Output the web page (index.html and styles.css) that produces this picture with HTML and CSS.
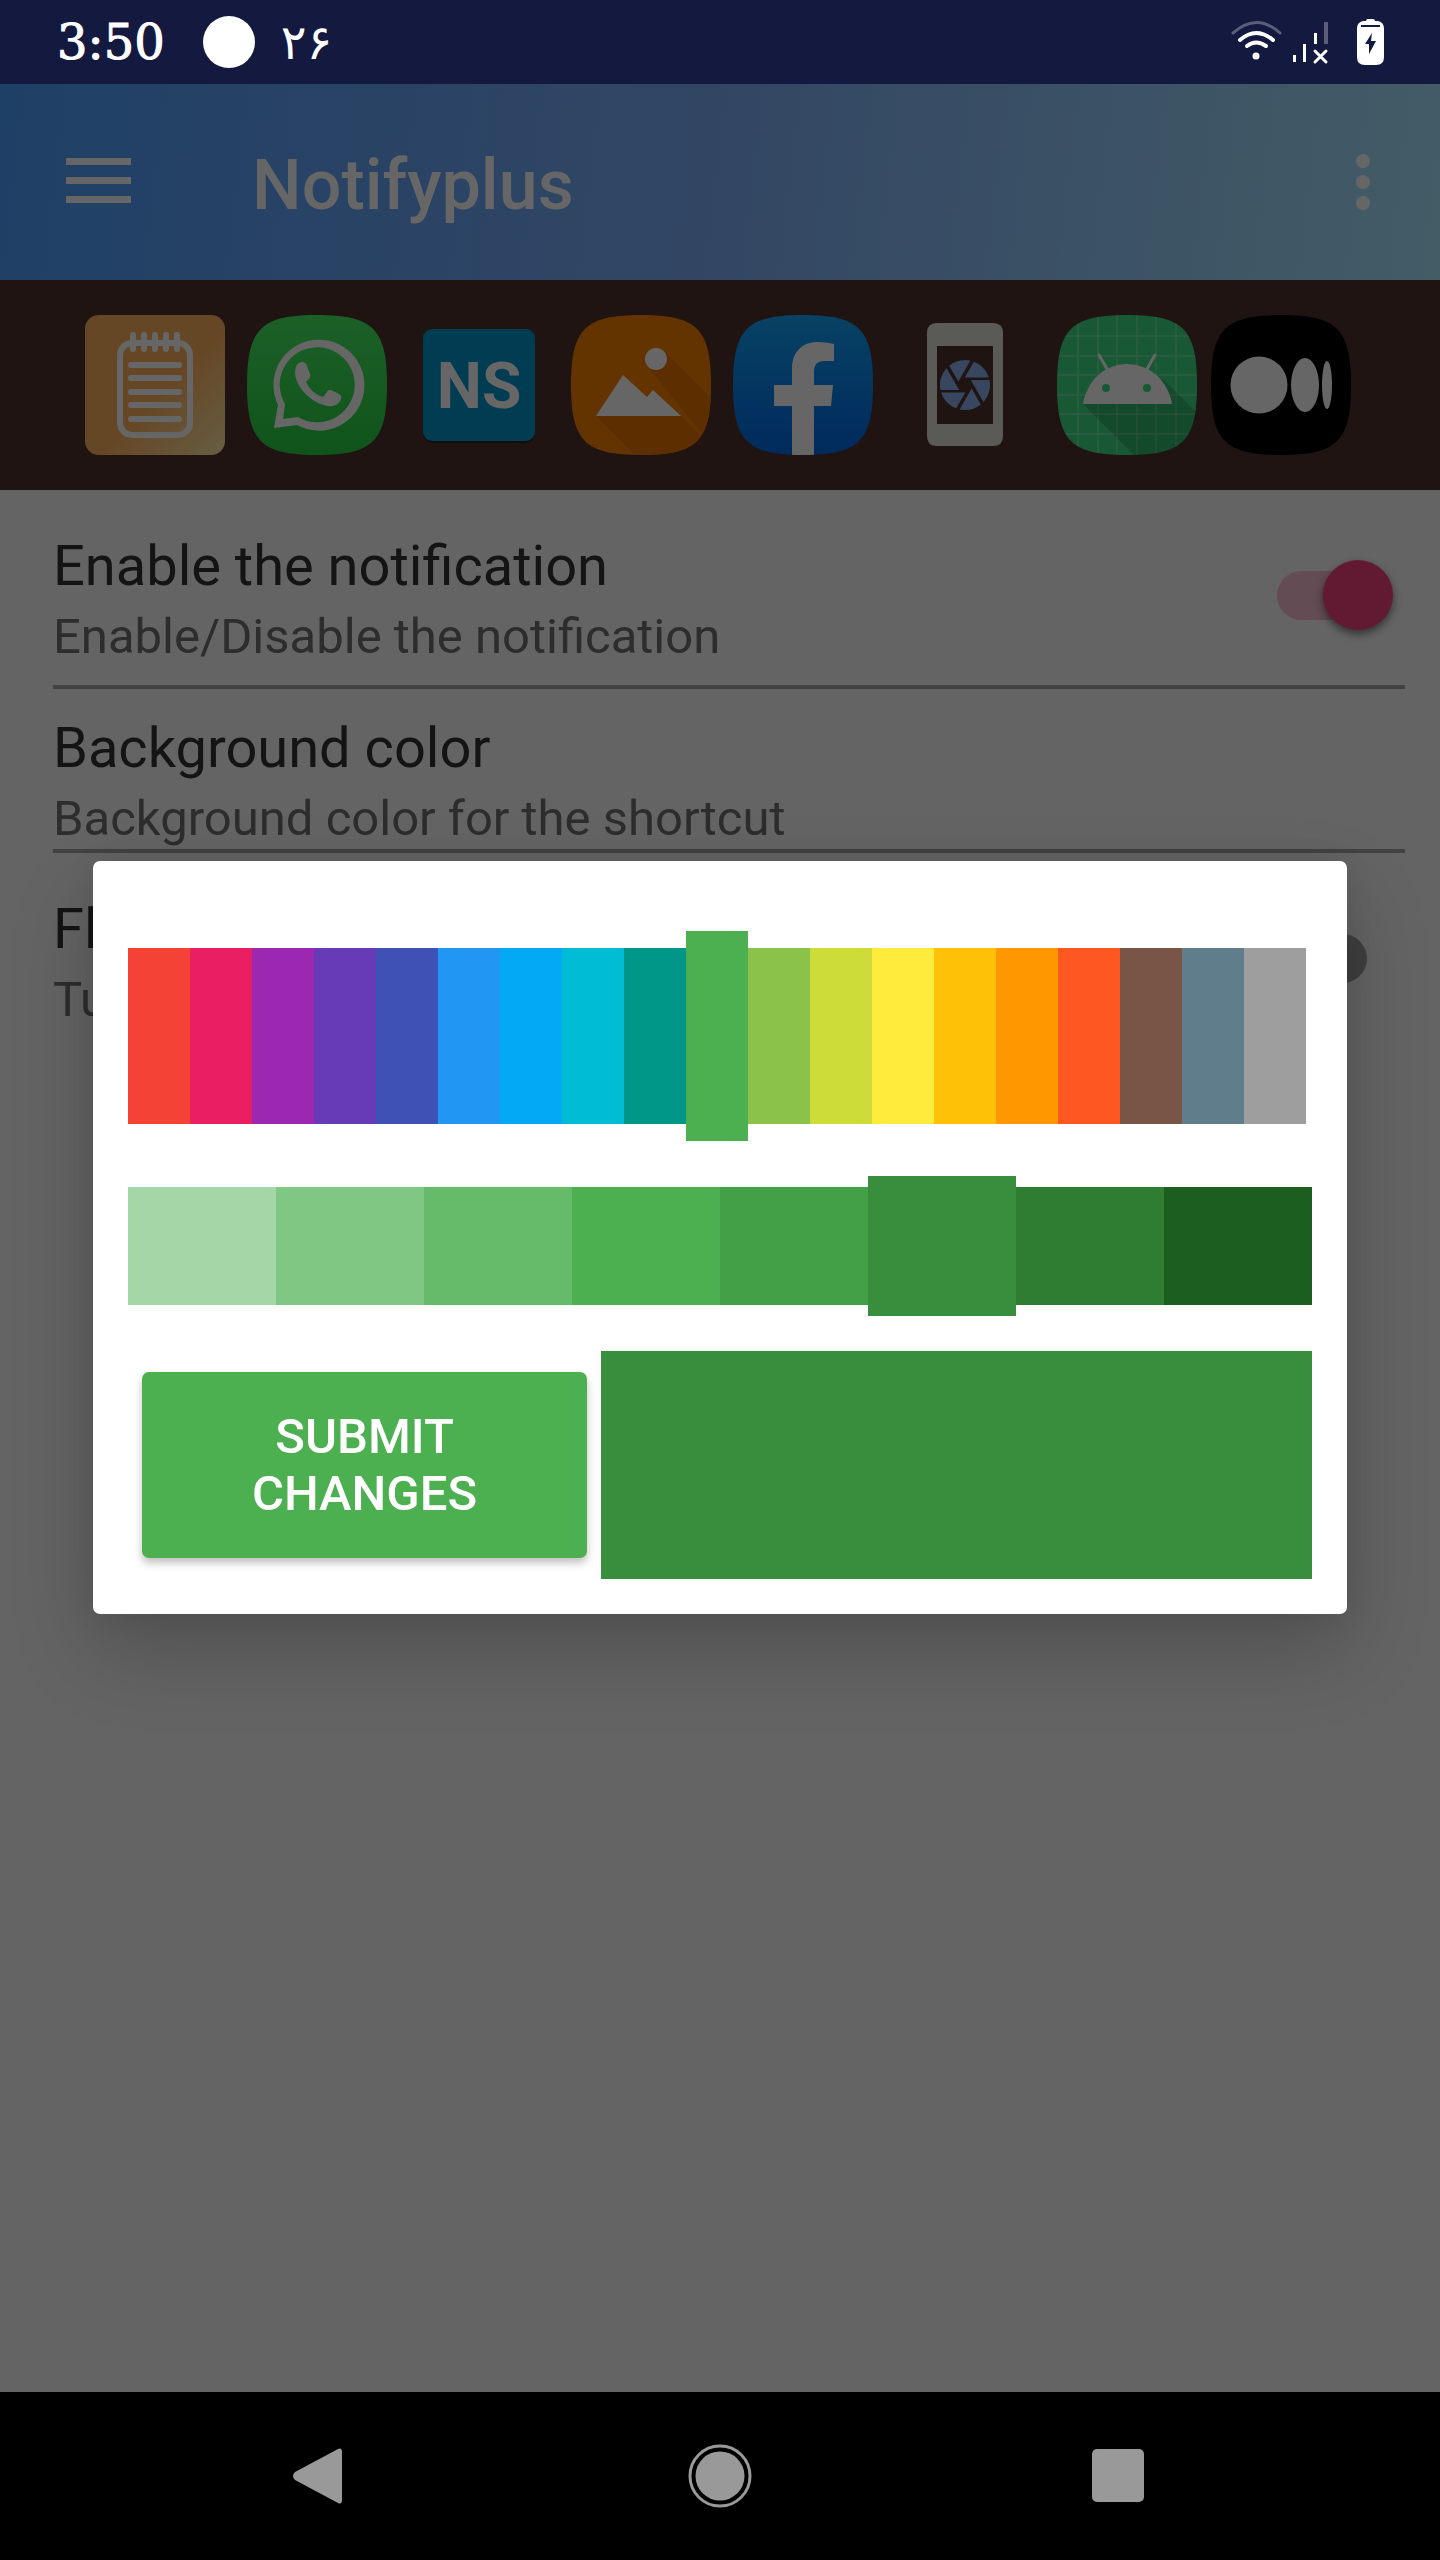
FILE: index.html
```html
<!DOCTYPE html>
<html lang="en">
<head>
<meta charset="utf-8">
<meta name="viewport" content="width=device-width, initial-scale=1">
<title>Notifyplus</title>
<link rel="stylesheet" href="styles.css">
</head>
<body>
<div class="status-bar">
  <span class="clock">3:50</span>
  <span class="status-dot"></span>
  <span class="day" lang="fa">۲۶</span>
  <svg class="status-icons" width="160" height="60" viewBox="1228 12 160 60" aria-hidden="true">
    <g fill="none" stroke="#fff" stroke-width="3" stroke-linecap="round">
      <path d="M1233 33Q1257 12 1280 33" opacity=".3"/>
      <path d="M1240 40Q1256 26 1273 40" stroke-width="4"/>
      <path d="M1247 46Q1256 39 1266 46" stroke-width="4"/>
      <path d="M1315 51L1326 62M1326 51L1315 62"/>
    </g>
    <circle cx="1256" cy="56" r="3.500" fill="#fff"/>
    <path fill="#fff" d="M1293 55H1296V62H1293ZM1303 44H1306V62H1303ZM1314 33H1317V44H1314Z"/>
    <path fill="#fff" opacity=".3" d="M1324 22H1328V44H1324Z"/>
    <path fill="#fff" d="M1366 21Q1366 19 1368 19H1373Q1375 19 1375 21L1378 21Q1384 22 1384 29V57Q1384 65 1376 65H1365Q1357 65 1357 57V29Q1357 22 1363 21Z"/>
    <path d="M1361 26H1380" stroke="#141940" stroke-width="2"/>
    <path fill="#141940" d="M1372 33L1365 44H1369V54L1376 41H1371Z"/>
  </svg>
</div>

<div class="screen">
  <header class="toolbar">
    <button class="icon-button" aria-label="Open menu">
      <svg width="65" height="48" viewBox="0 0 65 48"><path d="M0 0H65V7H0ZM0 19H65V26H0ZM0 38H65V45H0Z" fill="#fff"/></svg>
    </button>
    <h1 class="title">Notifyplus</h1>
    <button class="icon-button" aria-label="More options">
      <svg width="14" height="56" viewBox="0 0 14 56"><g fill="#fff"><circle cx="7" cy="7" r="7"/><circle cx="7" cy="28" r="7"/><circle cx="7" cy="49" r="7"/></g></svg>
    </button>
  </header>

  <div class="shortcuts">
    <svg viewBox="0 0 140 140" role="img" aria-label="Notes">
      <defs>
        <linearGradient id="notes" x1="0" y1="0" x2="1" y2="1"><stop offset=".55" stop-color="#ffb25e"/><stop offset="1" stop-color="#ffeba8"/></linearGradient>
        <linearGradient id="green" x1="0" y1="0" x2="0" y2="1"><stop offset="0" stop-color="#46f064"/><stop offset="1" stop-color="#28d246"/></linearGradient>
        <linearGradient id="blue" x1="0" y1="0" x2="0" y2="1"><stop offset="0" stop-color="#14a5fa"/><stop offset="1" stop-color="#0069e8"/></linearGradient>
        <clipPath id="squircle"><path d="M0 70C0 14 14 0 70 0S140 14 140 70 126 140 70 140 0 126 0 70Z"/></clipPath>
      </defs>
      <rect width="140" height="140" rx="14" fill="url(#notes)"/>
      <g fill="none" stroke="#fff" stroke-width="6" stroke-linecap="round">
        <rect x="35" y="28" width="70" height="92" rx="12"/>
        <path d="M48 20V34M59 20V34M70 20V34M81 20V34M92 20V34M46 50H94M46 63H94M46 77H94M46 90H94M46 104H94"/>
      </g>
    </svg>
    <svg viewBox="0 0 140 140" role="img" aria-label="WhatsApp">
      <g clip-path="url(#squircle)"><rect width="140" height="140" fill="url(#green)"/></g>
      <path fill="#fff" fill-rule="evenodd" d="M27 113L31 90A45.500 45.500 0 1 1 50 110ZM36 104L38 89A37.500 37.500 0 1 1 51 102Z"/>
      <path fill="#fff" d="M48 58C48 51 51 47 55 47C58 47 59 48 60 51L63 59C64 61 63 63 61 65L59 67C63 75 69 80 76 82L80 77C81 75 82 75 84 75L92 79C95 81 94 82 94 84C92 90 86 92 80 91C63 87 49 72 48 58Z"/>
    </svg>
    <svg viewBox="0 0 140 140" role="img" aria-label="NS">
      <rect x="14" y="16" width="112" height="112" rx="9" fill="#000" opacity=".4"/>
      <rect x="14" y="14" width="112" height="112" rx="9" fill="#0096cd"/>
      <text class="ns-mark" x="70" y="93" text-anchor="middle">NS</text>
    </svg>
    <svg viewBox="0 0 140 140" role="img" aria-label="Gallery">
      <g clip-path="url(#squircle)">
        <rect width="140" height="140" fill="#fa8200"/>
        <path fill="#e67400" d="M93 36L145 88V140H64L25 101H110L145 136L77 52Z"/>
      </g>
      <g fill="#fff"><circle cx="85" cy="44" r="11"/><path d="M25 101L52 60L76 82L82 75L110 101Z"/></g>
    </svg>
    <svg viewBox="0 0 140 140" role="img" aria-label="Facebook">
      <g clip-path="url(#squircle)">
        <rect width="140" height="140" fill="url(#blue)"/>
        <path fill="#fff" d="M59 140V91H41V70H59V54C59 37 69 27 85 27Q93 27 101 29V46H91C84 46 81 50 81 57V70H100L98 91H81V140Z"/>
      </g>
    </svg>
    <svg viewBox="0 0 140 140" role="img" aria-label="Screenshot">
      <path fill="#e1e1d8" fill-rule="evenodd" d="M42 8H98Q108 8 108 18V121Q108 131 98 131H42Q32 131 32 121V18Q32 8 42 8ZM42 31V109H98V31Z"/>
      <path fill="#8caef0" transform="translate(40 40) scale(2.500)" d="M9.400 10.500l4.770-8.260C13.470 2.090 12.750 2 12 2c-2.400 0-4.600.85-6.320 2.250l3.660 6.350.06-.1zM21.540 9c-.92-2.920-3.150-5.260-6-6.340L11.880 9h9.660zm.26 1h-7.490l.29.5 4.760 8.250C21 16.970 22 14.610 22 12c0-.69-.07-1.350-.2-2zM8.540 12l-3.900-6.750C3.010 7.030 2 9.390 2 12c0 .69.07 1.350.2 2h7.490l-1.150-2zm-6.080 3c.92 2.920 3.150 5.260 6 6.340L12.120 15H2.460zm11.270 0l-3.900 6.760c.7.15 1.420.24 2.170.24 2.400 0 4.600-.85 6.320-2.250l-3.660-6.350-.93 1.600z"/>
    </svg>
    <svg viewBox="0 0 140 140" role="img" aria-label="Android app">
      <g clip-path="url(#squircle)">
        <rect width="140" height="140" fill="#3ddc84"/>
        <path d="M21 0V140M41 0V140M60 0V140M80 0V140M99 0V140M119 0V140M0 21H140M0 41H140M0 60H140M0 80H140M0 99H140M0 119H140" stroke="#fff" stroke-opacity=".3" stroke-width="1.500"/>
        <path fill="#000" fill-opacity=".16" d="M26 89L77 140H140V98L106 64Z"/>
      </g>
      <path fill="#fff" d="M26 89C30 65 48 49 70 49S111 65 115 89Z"/>
      <path d="M42 40L50 54M98 40L90 54" stroke="#fff" stroke-width="3" stroke-linecap="round"/>
      <circle cx="49" cy="73" r="4" fill="#3ddc84"/><circle cx="90" cy="73" r="4" fill="#3ddc84"/>
    </svg>
    <svg class="last" viewBox="0 0 140 140" role="img" aria-label="Medium">
      <g clip-path="url(#squircle)"><rect width="140" height="140"/></g>
      <g fill="#fff"><circle cx="48" cy="70" r="28.500"/><ellipse cx="94" cy="70" rx="14" ry="27"/><ellipse cx="116" cy="70" rx="5" ry="24"/></g>
    </svg>
  </div>

  <main class="settings">
    <label class="row">
      <span class="text"><span class="name">Enable the notification</span><span class="hint">Enable/Disable the notification</span></span>
      <input class="switch" type="checkbox" checked>
    </label>
    <hr class="rule">
    <div class="row">
      <span class="text"><span class="name">Background color</span><span class="hint">Background color for the shortcut</span></span>
    </div>
    <hr class="rule tight">
    <label class="row">
      <span class="text"><span class="name">Flashlight</span><span class="hint">Turn on the flashlight</span></span>
      <input class="switch" type="checkbox">
    </label>
  </main>

  <div class="scrim">
    <form class="dialog" role="dialog" aria-label="Pick a color">
      <div class="swatches hues" role="radiogroup" aria-label="Color">
        <input type="radio" name="hue" aria-label="Red" class="red">
        <input type="radio" name="hue" aria-label="Pink" class="pink">
        <input type="radio" name="hue" aria-label="Purple" class="purple">
        <input type="radio" name="hue" aria-label="Deep purple" class="deep-purple">
        <input type="radio" name="hue" aria-label="Indigo" class="indigo">
        <input type="radio" name="hue" aria-label="Blue" class="blue">
        <input type="radio" name="hue" aria-label="Light blue" class="light-blue">
        <input type="radio" name="hue" aria-label="Cyan" class="cyan">
        <input type="radio" name="hue" aria-label="Teal" class="teal">
        <input type="radio" name="hue" aria-label="Green" class="green" checked>
        <input type="radio" name="hue" aria-label="Light green" class="light-green">
        <input type="radio" name="hue" aria-label="Lime" class="lime">
        <input type="radio" name="hue" aria-label="Yellow" class="yellow">
        <input type="radio" name="hue" aria-label="Amber" class="amber">
        <input type="radio" name="hue" aria-label="Orange" class="orange">
        <input type="radio" name="hue" aria-label="Deep orange" class="deep-orange">
        <input type="radio" name="hue" aria-label="Brown" class="brown">
        <input type="radio" name="hue" aria-label="Blue grey" class="blue-grey">
        <input type="radio" name="hue" aria-label="Grey" class="grey">
      </div>
      <div class="swatches shades" role="radiogroup" aria-label="Shade">
        <input type="radio" name="shade" aria-label="Green 200" class="green-200">
        <input type="radio" name="shade" aria-label="Green 300" class="green-300">
        <input type="radio" name="shade" aria-label="Green 400" class="green-400">
        <input type="radio" name="shade" aria-label="Green 500" class="green">
        <input type="radio" name="shade" aria-label="Green 600" class="green-600">
        <input type="radio" name="shade" aria-label="Green 700" class="green-700" checked>
        <input type="radio" name="shade" aria-label="Green 800" class="green-800">
        <input type="radio" name="shade" aria-label="Green 900" class="green-900">
      </div>
      <div class="actions">
        <button class="submit" type="button">SUBMIT CHANGES</button>
        <div class="preview green-700"></div>
      </div>
    </form>
  </div>
</div>

<nav class="nav-bar">
  <button aria-label="Back"><svg width="64" height="64" viewBox="0 0 64 64"><path d="M7 28L50 5Q54 3 54 8V56Q54 61 50 59L7 36Q3 32 7 28Z" fill="#999"/></svg></button>
  <button aria-label="Home"><svg width="64" height="64" viewBox="0 0 64 64"><circle cx="32" cy="32" r="30" fill="none" stroke="#999" stroke-width="3"/><circle cx="32" cy="32" r="24.500" fill="#999"/></svg></button>
  <button aria-label="Recent apps"><svg width="64" height="64" viewBox="0 0 64 64"><rect x="4" y="5" width="52" height="53" rx="5" fill="#999"/></svg></button>
</nav>
</body>
</html>
```

FILE: styles.css
```css
* {
  box-sizing: border-box;
}

body {
  margin: 0;
  min-height: 100vh;
  display: flex;
  flex-direction: column;
  background: #fafafa;
  font-family: Roboto, "Noto Sans", sans-serif;
}

button {
  padding: 0;
  border: 0;
  background: none;
  font: inherit;
}

svg {
  display: block;
}

/* System status bar */
.status-bar {
  display: flex;
  align-items: center;
  height: 84px;
  padding: 0 52px 0 57px;
  background: #141940;
  color: #fff;
}

.clock {
  font: 48px/56px "DejaVu Serif", serif;
  -webkit-text-stroke: 1px #fff;
}

.status-dot {
  width: 52px;
  height: 52px;
  margin: 0 26px 0 38px;
  border-radius: 50%;
  background: #fff;
}

.day {
  font: 48px/56px "DejaVu Sans", sans-serif;
}

.status-icons {
  margin-left: auto;
}

/* App content; the dialog layer covers all of it */
.screen {
  position: relative;
  flex: 1;
}

.toolbar {
  display: flex;
  align-items: center;
  height: 196px;
  padding: 0 70px 0 66px;
  background: linear-gradient(97deg, #4ea0ff 0%, #7fb0fa 50%, #aae6ff 100%);
}

.title {
  flex: 1;
  margin: 6px 0 0 121px;
  color: #fff;
  font-size: 70px;
  line-height: 82px;
  font-weight: 500;
}

.shortcuts {
  display: flex;
  align-items: center;
  gap: 22px;
  height: 210px;
  padding-left: 85px;
  background: #4e342e;
}

.shortcuts svg {
  flex: none;
  width: 140px;
  height: 140px;
}

.shortcuts .last {
  margin-left: -8px;
}

.ns-mark {
  fill: #fff;
  font-size: 64px;
  font-weight: 700;
}

/* Settings list */
.settings {
  padding: 34px 35px 34px 53px;
}

.row {
  display: flex;
  align-items: center;
  justify-content: space-between;
  padding-right: 12px;
}

.text {
  display: flex;
  flex-direction: column;
  gap: 9px;
  padding-top: 9px;
}

.name {
  color: #333;
  font-size: 56px;
  line-height: 66px;
}

.hint {
  color: #707070;
  font-size: 49px;
  line-height: 58px;
}

.rule {
  height: 4px;
  margin: 19px 0 17px;
  border: 0;
  background: #a6a6a6;
}

.rule.tight {
  margin: 1px 0 34px;
}

.switch {
  appearance: none;
  display: grid;
  align-items: center;
  width: 142px;
  height: 72px;
  margin: 0;
}

.switch::before,
.switch::after {
  content: "";
  grid-area: 1 / 1;
}

.switch::before {
  justify-self: center;
  width: 90px;
  height: 49px;
  border-radius: 25px;
  background: #a0a0a0;
}

.switch::after {
  width: 70px;
  height: 70px;
  border-radius: 50%;
  background: #f0f0f0;
  box-shadow: 0 4px 8px rgba(0, 0, 0, .5);
}

.switch:checked::before {
  background: #f7bed0;
}

.switch:checked::after {
  justify-self: end;
  background: #f5417d;
}

/* Color dialog */
.scrim {
  position: absolute;
  inset: 0;
  display: flex;
  align-items: center;
  padding: 0 93px 2px;
  background: rgba(0, 0, 0, .6);
}

.dialog {
  display: flex;
  flex-direction: column;
  gap: 35px;
  width: 100%;
  padding: 70px 35px 35px;
  border-radius: 7px;
  background: #fff;
  box-shadow: 0 36px 84px rgba(0, 0, 0, .2), 0 0 28px rgba(0, 0, 0, .08);
}

.swatches {
  display: flex;
}

.swatches input {
  appearance: none;
  flex: 1;
  margin: 17px 0;
}

.hues {
  height: 210px;
  padding-right: 6px;
}

.shades {
  height: 140px;
}

.shades input {
  margin: 11px 0;
}

.swatches input:checked {
  margin: 0;
}

.actions {
  display: flex;
  height: 228px;
}

.submit {
  flex: 0 1 445px;
  margin: 21px 14px;
  padding: 0 80px;
  border-radius: 7px;
  background: #4caf50;
  box-shadow: 0 5px 8px rgba(0, 0, 0, .25);
  color: #fff;
  font-size: 49px;
  line-height: 57px;
  font-weight: 500;
}

.preview {
  flex: 1;
}

.red { background: #f44336; }
.pink { background: #e91e63; }
.purple { background: #9c27b0; }
.deep-purple { background: #673ab7; }
.indigo { background: #3f51b5; }
.blue { background: #2196f3; }
.light-blue { background: #03a9f4; }
.cyan { background: #00bcd4; }
.teal { background: #009688; }
.green { background: #4caf50; }
.light-green { background: #8bc34a; }
.lime { background: #cddc39; }
.yellow { background: #ffeb3b; }
.amber { background: #ffc107; }
.orange { background: #ff9800; }
.deep-orange { background: #ff5722; }
.brown { background: #795548; }
.blue-grey { background: #607d8b; }
.grey { background: #9e9e9e; }
.green-200 { background: #a5d6a7; }
.green-300 { background: #81c784; }
.green-400 { background: #66bb6a; }
.green-600 { background: #43a047; }
.green-700 { background: #388e3c; }
.green-800 { background: #2e7d32; }
.green-900 { background: #1b5e20; }

/* System navigation bar */
.nav-bar {
  display: flex;
  align-items: center;
  justify-content: center;
  gap: 336px;
  height: 168px;
  background: #000;
}
```
